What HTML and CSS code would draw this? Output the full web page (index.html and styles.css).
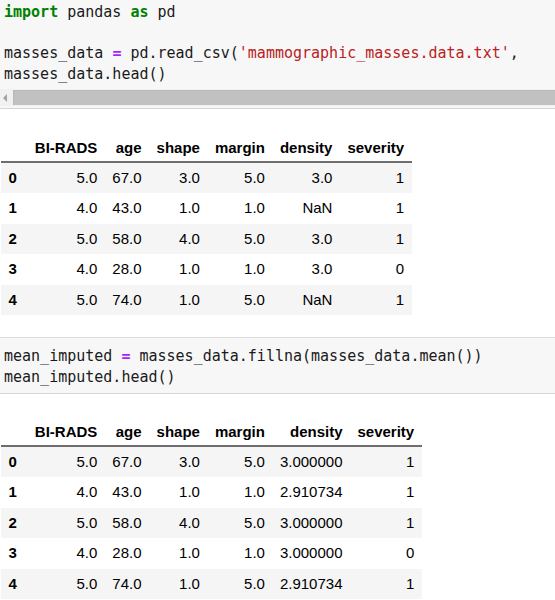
FILE: index.html
```
<!DOCTYPE html>
<html>
<head>
<meta charset="utf-8">
<link rel="stylesheet" href="styles.css">
</head>
<body>
<div class="cell cell-first">
<pre class="code code-first"><span class="kw">import</span> pandas <span class="kw">as</span> pd

masses_data <span class="op">=</span> pd.read_csv(<span class="str">'mammographic_masses.data.txt'</span>,
masses_data.head()</pre>
<div class="hscroll"><span class="arrow"></span><div class="thumb"></div></div>
</div>

<div class="output output-first">
<table class="df">
<thead>
<tr><th></th><th>BI-RADS</th><th>age</th><th>shape</th><th>margin</th><th>density</th><th>severity</th></tr>
</thead>
<tbody>
<tr><th>0</th><td>5.0</td><td>67.0</td><td>3.0</td><td>5.0</td><td>3.0</td><td>1</td></tr>
<tr><th>1</th><td>4.0</td><td>43.0</td><td>1.0</td><td>1.0</td><td>NaN</td><td>1</td></tr>
<tr><th>2</th><td>5.0</td><td>58.0</td><td>4.0</td><td>5.0</td><td>3.0</td><td>1</td></tr>
<tr><th>3</th><td>4.0</td><td>28.0</td><td>1.0</td><td>1.0</td><td>3.0</td><td>0</td></tr>
<tr><th>4</th><td>5.0</td><td>74.0</td><td>1.0</td><td>5.0</td><td>NaN</td><td>1</td></tr>
</tbody>
</table>
</div>

<div class="cell cell-second">
<pre class="code code-second">mean_imputed <span class="op">=</span> masses_data.fillna(masses_data.mean())
mean_imputed.head()</pre>
</div>

<div class="output output-second">
<table class="df">
<thead>
<tr><th></th><th>BI-RADS</th><th>age</th><th>shape</th><th>margin</th><th>density</th><th>severity</th></tr>
</thead>
<tbody>
<tr><th>0</th><td>5.0</td><td>67.0</td><td>3.0</td><td>5.0</td><td>3.000000</td><td>1</td></tr>
<tr><th>1</th><td>4.0</td><td>43.0</td><td>1.0</td><td>1.0</td><td>2.910734</td><td>1</td></tr>
<tr><th>2</th><td>5.0</td><td>58.0</td><td>4.0</td><td>5.0</td><td>3.000000</td><td>1</td></tr>
<tr><th>3</th><td>4.0</td><td>28.0</td><td>1.0</td><td>1.0</td><td>3.000000</td><td>0</td></tr>
<tr><th>4</th><td>5.0</td><td>74.0</td><td>1.0</td><td>5.0</td><td>2.910734</td><td>1</td></tr>
</tbody>
</table>
</div>
</body>
</html>
```
FILE: styles.css
```
html, body {
  margin: 0;
  padding: 0;
  background: #ffffff;
  overflow: hidden;
}

.cell {
  background: #f7f7f7;
  border-bottom: 1px solid #d6d6d6;
}

.cell-second {
  border-top: 1px solid #dcdcdc;
  margin-top: 22px;
}

.code {
  margin: 0;
  font-family: "DejaVu Sans Mono", monospace;
  font-size: 15px;
  line-height: 20.5px;
  color: #1a1a1a;
  white-space: pre;
}

.code-first {
  padding: 2px 0 0 4px;
  height: 87px;
  box-sizing: border-box;
}

.code-second {
  padding: 8px 0 6px 4px;
}

.kw {
  color: #008000;
  font-weight: bold;
}

.op {
  color: #aa22ff;
  font-weight: bold;
}

.str {
  color: #ba2121;
}

.hscroll {
  display: flex;
  align-items: center;
  height: 17px;
  background: #f1f1f1;
  margin-top: 2px;
  margin-bottom: 2px;
}

.arrow {
  width: 0;
  height: 0;
  margin: 0 6px 0 3px;
  border-top: 4px solid transparent;
  border-bottom: 4px solid transparent;
  border-right: 4px solid #a3a3a3;
}

.thumb {
  flex: 1;
  height: 15px;
  background: #c1c1c1;
  border-top: 1px solid #b9b9b9;
  border-left: 1px solid #b9b9b9;
  box-sizing: border-box;
}

.output-first {
  padding-top: 22px;
}

.output-second {
  padding-top: 21px;
}

.df {
  border-collapse: collapse;
  margin-left: 1px;
  font-family: "Liberation Sans", Arial, sans-serif;
  font-size: 15px;
  color: #000;
}

.df th,
.df td {
  padding: 7px 7.5px;
  line-height: 16.5px;
  text-align: right;
  white-space: nowrap;
}

.df th {
  font-weight: bold;
}

.df tbody th,
.df thead th:first-child {
  text-align: left;
  padding-right: 10.5px;
}

.df thead th {
  padding-top: 9px;
  padding-bottom: 4px;
  border-bottom: 2px solid #6e6e6e;
}

.df tbody tr:nth-child(odd) {
  background: #f5f5f5;
}
```
